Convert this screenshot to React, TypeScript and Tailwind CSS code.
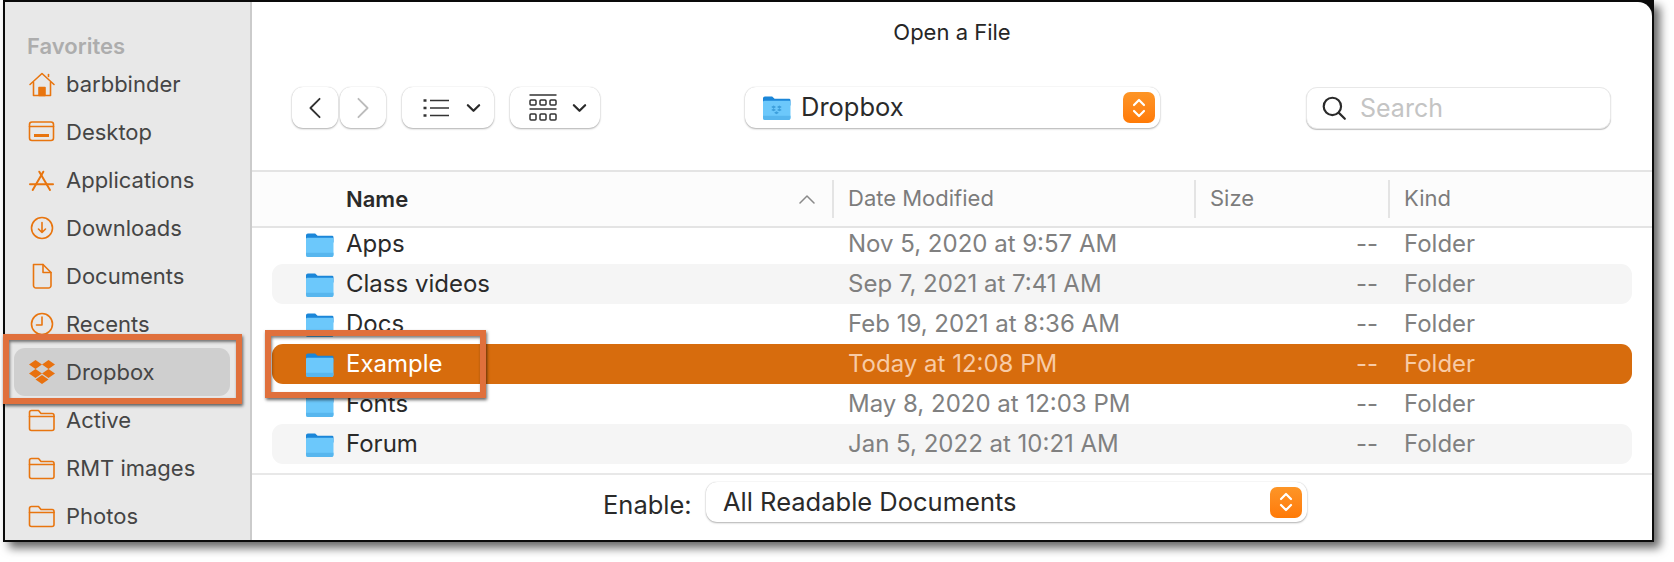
const favorites = [
  { label: "barbbinder", icon: "home" },
  { label: "Desktop", icon: "desktop" },
  { label: "Applications", icon: "apps" },
  { label: "Downloads", icon: "downloads" },
  { label: "Documents", icon: "documents" },
  { label: "Recents", icon: "recents" },
  { label: "Dropbox", icon: "dropbox", active: true },
  { label: "Active", icon: "folder" },
  { label: "RMT images", icon: "folder" },
  { label: "Photos", icon: "folder" },
];

const files = [
  { name: "Apps", date: "Nov 5, 2020 at 9:57 AM" },
  { name: "Class videos", date: "Sep 7, 2021 at 7:41 AM", striped: true },
  { name: "Docs", date: "Feb 19, 2021 at 8:36 AM" },
  { name: "Example", date: "Today at 12:08 PM", selected: true },
  { name: "Fonts", date: "May 8, 2020 at 12:03 PM" },
  { name: "Forum", date: "Jan 5, 2022 at 10:21 AM", striped: true },
];

function SidebarIcon({ name }: { name: string }) {
  const stroke = {
    fill: "none",
    stroke: "#e8750f",
    strokeWidth: 1.6,
    strokeLinecap: "round" as const,
    strokeLinejoin: "round" as const,
  };
  return (
    <svg viewBox="0 0 28 28" className="w-[28px] h-[28px] shrink-0">
      {name === "home" && (
        <g {...stroke}>
          <path d="M2 14.5 14 3.5l12 11" />
          <path d="M5.5 12.5V25.5H22.5V12.5" />
          <path d="M20.5 6.5V4.5" />
          <path d="M11 25.5V17.5H17V25.5Z" fill="#e8750f" />
        </g>
      )}
      {name === "desktop" && (
        <g {...stroke}>
          <rect x="1.5" y="4" width="24" height="18.5" rx="2.5" />
          <path d="M1.5 8.5H25.5" />
          <path d="M6 17.5H21" strokeWidth="3" strokeLinecap="butt" />
        </g>
      )}
      {name === "apps" && (
        <g {...stroke} strokeWidth="2">
          <path d="M11.3 5.700 22 24" />
          <path d="M15.300 5.700 4.700 24" />
          <path d="M2 18.300H25" />
        </g>
      )}
      {name === "downloads" && (
        <g {...stroke}>
          <circle cx="14" cy="14" r="10.5" />
          <path d="M14 8.5V18.5M10.5 15 14 18.5 17.5 15" />
        </g>
      )}
      {name === "documents" && (
        <g {...stroke}>
          <path d="M5.5 2.5H15L23 10.5V23.5A2.5 2.5 0 0 1 20.5 26H8A2.5 2.5 0 0 1 5.5 23.5Z" />
          <path d="M15 2.5V10.5H23" />
        </g>
      )}
      {name === "recents" && (
        <g {...stroke}>
          <circle cx="14" cy="14" r="10.5" />
          <path d="M14 7V15H8.5" />
        </g>
      )}
      {name === "dropbox" && (
        <path
          fill="#e8710f"
          d="M8.5 3 2 7.5 8.5 12 15 7.5ZM21.5 3 15 7.500 21.500 12 28 7.500ZM2 16.500 8.500 21 15 16.500 8.500 12ZM21.500 12 15 16.500 21.500 21 28 16.500ZM15 18 8.500 22.500 15 27 21.500 22.500Z"
          transform="translate(-1 -1)"
        />
      )}
      {name === "folder" && (
        <g {...stroke}>
          <path d="M1.500 7V22.500A2 2 0 0 0 3.500 24.500H24A2 2 0 0 0 26 22.500V9.500A2 2 0 0 0 24 7.500H13L10.500 4.500H3.500A2 2 0 0 0 1.500 6.500Z" />
          <path d="M1.500 10.500H26" />
        </g>
      )}
    </svg>
  );
}

function BlueFolder({ dropbox }: { dropbox?: boolean }) {
  return (
    <svg viewBox="0 0 30 28" className="w-[29px] h-[27px] shrink-0">
      <path d="M1 4.500A2 2 0 0 1 3 2.500H10.500L13 5H28A1.500 1.500 0 0 1 29.500 6.500V12H1Z" fill="#1b86d8" />
      <path d="M1 8.500A1.500 1.500 0 0 1 2.500 7H28A1.500 1.500 0 0 1 29.500 8.500V25A2 2 0 0 1 27.500 27H3A2 2 0 0 1 1 25Z" fill="#6cc8fb" />
      <path d="M1 22.500H29.500V25A2 2 0 0 1 27.500 27H3A2 2 0 0 1 1 25Z" fill="#57b6ee" />
      {dropbox && (
        <path
          fill="#3d9fdc"
          d="M12 12 9.500 13.500 12 15 14.500 13.500ZM18 12 15.500 13.500 18 15 20.500 13.500ZM9.500 16.500 12 18 14.500 16.500 12 15ZM18 15 15.500 16.500 18 18 20.500 16.500ZM15 18 12.500 19.500 15 21 17.500 19.500Z"
        />
      )}
    </svg>
  );
}

function Stepper() {
  return (
    <span className="flex items-center justify-center w-[32px] h-[31px] rounded-[7px] bg-gradient-to-b from-[#fd9526] to-[#ff7a05]">
      <svg viewBox="0 0 16 22" className="w-[16px] h-[22px]" fill="none" stroke="#fff" strokeWidth="2.200" strokeLinecap="round" strokeLinejoin="round">
        <path d="M3 8 8 3l5 5" />
        <path d="M3 14l5 5 5-5" />
      </svg>
    </span>
  );
}

function Chevron() {
  return (
    <svg viewBox="0 0 16 10" className="w-[15px] h-[10px]" fill="none" stroke="#2b2b2b" strokeWidth="2.400" strokeLinecap="round" strokeLinejoin="round">
      <path d="M2 2l6 6 6-6" />
    </svg>
  );
}

const btn = "h-[41px] bg-white rounded-[11px] shadow-[0_1px_2px_rgba(0,0,0,0.3),0_0_1px_rgba(0,0,0,0.2)] flex items-center";

export default function App() {
  return (
    <div className="relative w-[1674px] h-[562px] bg-white overflow-hidden text-[24px] text-[#2a2a2a] font-['Inter',sans-serif]">
      <div className="ml-[3px] w-[1651px] h-[542px] bg-[#0a0a0a] p-[2px] shadow-[6px_6px_9px_rgba(0,0,0,0.6)]">
        <div className="flex h-[538px] bg-white rounded-tr-[14px] overflow-hidden">
          {/* sidebar */}
          <aside className="w-[247px] shrink-0 bg-[#e8e8e8] border-r-[2px] border-[#cbcbcb] pt-[31px] pl-[9px] pr-[20px] text-[22px]">
            <div className="h-[26px] pl-[13px] text-[22px] leading-[26px] font-semibold text-[#adadad]">Favorites</div>
            <div className="mt-[1px]">
              {favorites.map((f) => (
                <div
                  key={f.label}
                  className={`h-[48px] flex items-center gap-[10px] pl-[14px] rounded-[11px] ${f.active ? "bg-[#cfcfcf]" : ""}`}
                >
                  <SidebarIcon name={f.icon} />
                  <span className="text-[#454545]">{f.label}</span>
                </div>
              ))}
            </div>
          </aside>

          <main className="flex-1 min-w-0 flex flex-col">
            <div className="h-[59px] pt-[17px] text-center text-[22px] leading-[26px] text-[#262626]">Open a File</div>

            {/* toolbar */}
            <div className="flex items-center h-[41px] mt-[26px] pl-[40px]">
              <div className={`${btn} w-[46px] justify-center`}>
                <svg viewBox="0 0 14 24" className="w-[14px] h-[22px]" fill="none" stroke="#333" strokeWidth="2" strokeLinecap="round" strokeLinejoin="round">
                  <path d="M12 2 2 12l10 10" />
                </svg>
              </div>
              <div className={`${btn} w-[46px] justify-center ml-[2px]`}>
                <svg viewBox="0 0 14 24" className="w-[14px] h-[22px]" fill="none" stroke="#bcbcbc" strokeWidth="2" strokeLinecap="round" strokeLinejoin="round">
                  <path d="M2 2l10 10L2 22" />
                </svg>
              </div>
              <div className={`${btn} w-[92px] ml-[16px] pl-[21px] gap-[17px]`}>
                <svg viewBox="0 0 26 20" className="w-[26px] h-[20px]" fill="none" stroke="#333" strokeWidth="1.600">
                  <path d="M7 2.500H26M7 10H26M7 17.500H26" />
                  <path d="M0.500 2.500H3.500M0.500 10H3.500M0.500 17.500H3.500" strokeWidth="2.400" />
                </svg>
                <Chevron />
              </div>
              <div className={`${btn} w-[90px] ml-[16px] pl-[19px] gap-[15px]`}>
                <svg viewBox="0 0 28 28" className="w-[28px] h-[28px]" fill="none" stroke="#333" strokeWidth="1.500">
                  <path d="M0.500 1H27.500M0.500 15H27.500" />
                  <rect x="1" y="6" width="6" height="5" rx="1" />
                  <rect x="11" y="6" width="6" height="5" rx="1" />
                  <rect x="21" y="6" width="6" height="5" rx="1" />
                  <rect x="1" y="20" width="6" height="6" rx="1" />
                  <rect x="11" y="20" width="6" height="6" rx="1" />
                  <rect x="21" y="20" width="6" height="6" rx="1" />
                </svg>
                <Chevron />
              </div>
              <div className={`${btn} w-[415px] ml-[145px] pl-[17px] pr-[5px] justify-between`}>
                <span className="flex items-center gap-[10px]">
                  <BlueFolder dropbox />
                  <span className="text-[25.5px]">Dropbox</span>
                </span>
                <Stepper />
              </div>
              <div className="h-[42px] w-[305px] ml-[146px] bg-white rounded-[11px] border border-[#e8e8e8] shadow-[0_1px_1px_rgba(0,0,0,0.25)] flex items-center pl-[14px] gap-[13px]">
                <svg viewBox="0 0 24 24" className="w-[26px] h-[26px]" fill="none" stroke="#2a2a2a" strokeWidth="2" strokeLinecap="round">
                  <circle cx="10.500" cy="10.500" r="8" />
                  <path d="M16.500 16.500 22 22" />
                </svg>
                <span className="text-[#c4c4c4] text-[25px] mt-[3px]">Search</span>
              </div>
            </div>

            {/* column headers */}
            <div className="h-[58px] mt-[42px] flex items-center bg-[#fcfcfc] border-y-[2px] border-[#e4e4e4] text-[22px] text-[#7c7c7c] shrink-0">
              <span className="w-[94px] shrink-0" />
              <span className="w-[486px] shrink-0 font-semibold text-[#2a2a2a] flex items-center justify-between pr-[17px]">
                Name
                <svg viewBox="0 0 16 10" className="w-[16px] h-[10px]" fill="none" stroke="#8a8a8a" strokeWidth="1.500" strokeLinecap="round" strokeLinejoin="round">
                  <path d="M1 9l7-7 7 7" />
                </svg>
              </span>
              <span className="w-[362px] shrink-0 h-[38px] pl-[14px] leading-[36px] border-l-[2px] border-[#e4e4e4]">Date Modified</span>
              <span className="w-[194px] shrink-0 h-[38px] pl-[14px] leading-[36px] border-l-[2px] border-[#e4e4e4]">Size</span>
              <span className="h-[38px] pl-[14px] leading-[36px] border-l-[2px] border-[#e4e4e4]">Kind</span>
            </div>

            {/* file list */}
            <div className="h-[245px] overflow-hidden pl-[20px] pr-[20px] shrink-0">
              <div className="-mt-[4px]">
                {files.map((f) => (
                  <div
                    key={f.name}
                    className={`h-[40px] flex items-center rounded-[11px] ${
                      f.selected ? "bg-[#d76c0d] text-white" : f.striped ? "bg-[#f5f5f5]" : ""
                    }`}
                  >
                    <span className="w-[74px] pl-[33px] shrink-0 flex">
                      <BlueFolder />
                    </span>
                    <span className="w-[502px] shrink-0">{f.name}</span>
                    <span className={`w-[508px] shrink-0 ${f.selected ? "text-[#f8cba6]" : "text-[#808080]"}`}>{f.date}</span>
                    <span className={`w-[48px] shrink-0 ${f.selected ? "text-[#f8cba6]" : "text-[#808080]"}`}>--</span>
                    <span className={f.selected ? "text-[#f8cba6]" : "text-[#808080]"}>Folder</span>
                  </div>
                ))}
                <div className="h-[40px] pl-[33px] pt-[7px]">
                  <BlueFolder />
                </div>
              </div>
            </div>

            {/* footer */}
            <div className="flex-1 border-t-[2px] border-[#e8e8e8] flex items-start pt-[7px] pl-[351px]">
              <span className="w-[103px] shrink-0 text-[25.5px] leading-[30px] mt-[8px] text-[#2a2a2a]">Enable:</span>
              <div className="w-[601px] h-[40px] bg-white rounded-[11px] shadow-[0_1px_2px_rgba(0,0,0,0.3),0_0_1px_rgba(0,0,0,0.2)] flex items-center justify-between pl-[17px] pr-[5px]">
                <span className="text-[25.5px]">All Readable Documents</span>
                <Stepper />
              </div>
            </div>
          </main>
        </div>
      </div>

      {/* annotation boxes drawn over the dialog */}
      <div className="absolute left-[3px] top-[334px] w-[239px] h-[70px] border-[6px] border-[#e0703c] shadow-[1px_2px_3px_rgba(0,0,0,0.6),inset_1px_2px_3px_rgba(0,0,0,0.5)]" />
      <div className="absolute left-[265px] top-[330px] w-[221px] h-[68px] border-[6px] border-[#e0703c] shadow-[1px_2px_3px_rgba(0,0,0,0.6),inset_1px_2px_3px_rgba(0,0,0,0.5)]" />
    </div>
  );
}
